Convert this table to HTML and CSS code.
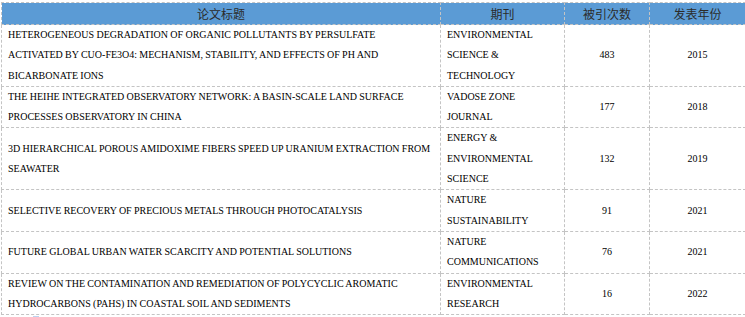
FILE: index.html
```html
<!DOCTYPE html>
<html>
<head>
<meta charset="utf-8">
<link rel="stylesheet" href="styles.css">
</head>
<body>
<div class="wrap">
<table class="papers">
  <colgroup>
    <col class="c-title"><col class="c-journal"><col class="c-cite"><col class="c-year">
  </colgroup>
  <thead>
    <tr><th>论文标题</th><th>期刊</th><th>被引次数</th><th>发表年份</th></tr>
  </thead>
  <tbody>
    <tr><td>HETEROGENEOUS DEGRADATION OF ORGANIC POLLUTANTS BY PERSULFATE<br>ACTIVATED BY CUO-FE3O4: MECHANISM, STABILITY, AND EFFECTS OF PH AND BICARBONATE IONS</td><td>ENVIRONMENTAL SCIENCE &amp; TECHNOLOGY</td><td class="num">483</td><td class="num">2015</td></tr>
    <tr><td>THE HEIHE INTEGRATED OBSERVATORY NETWORK: A BASIN-SCALE LAND SURFACE PROCESSES OBSERVATORY IN CHINA</td><td>VADOSE ZONE JOURNAL</td><td class="num">177</td><td class="num">2018</td></tr>
    <tr><td>3D HIERARCHICAL POROUS AMIDOXIME FIBERS SPEED UP URANIUM EXTRACTION FROM SEAWATER</td><td>ENERGY &amp; ENVIRONMENTAL SCIENCE</td><td class="num">132</td><td class="num">2019</td></tr>
    <tr><td>SELECTIVE RECOVERY OF PRECIOUS METALS THROUGH PHOTOCATALYSIS</td><td>NATURE SUSTAINABILITY</td><td class="num">91</td><td class="num">2021</td></tr>
    <tr><td>FUTURE GLOBAL URBAN WATER SCARCITY AND POTENTIAL SOLUTIONS</td><td>NATURE COMMUNICATIONS</td><td class="num">76</td><td class="num">2021</td></tr>
    <tr><td>REVIEW ON THE CONTAMINATION AND REMEDIATION OF POLYCYCLIC AROMATIC HYDROCARBONS (PAHS) IN COASTAL SOIL AND SEDIMENTS</td><td>ENVIRONMENTAL RESEARCH</td><td class="num">16</td><td class="num">2022</td></tr>
  </tbody>
</table>
<div class="mark"></div>
</div>
</body>
</html>
```
FILE: styles.css
```css
html, body {
  margin: 0;
  padding: 0;
  background: #ffffff;
}
.wrap {
  padding: 2px 0 0 1px;
}
.papers {
  width: 744px;
  border-collapse: collapse;
  table-layout: fixed;
  font-family: "Liberation Serif", "Times New Roman", serif;
  font-size: 10px;
  word-spacing: -0.2px;
  color: #000;
}
.c-title { width: 439px; }
.c-journal { width: 124px; }
.c-cite { width: 85px; }
.c-year { width: 96px; }
.papers th, .papers td {
  border: 1px dashed #c4c4c4;
}
.papers th {
  background: #5b9bd5;
  height: 21px;
  padding: 0;
  font-family: "Noto Sans CJK SC", "Noto Sans", sans-serif;
  font-weight: normal;
  font-size: 12px;
  word-spacing: 0;
  color: #2b2b2b;
  text-align: center;
  vertical-align: middle;
  line-height: 21px;
}
.papers td {
  padding: 0 6px;
  line-height: 20.3px;
  vertical-align: middle;
  text-align: left;
}
.papers td.num {
  text-align: center;
  padding: 0;
}
.mark {
  margin: 1px 0 0 32px;
  width: 6px;
  height: 1px;
  background: #bcd4f0;
}
```
